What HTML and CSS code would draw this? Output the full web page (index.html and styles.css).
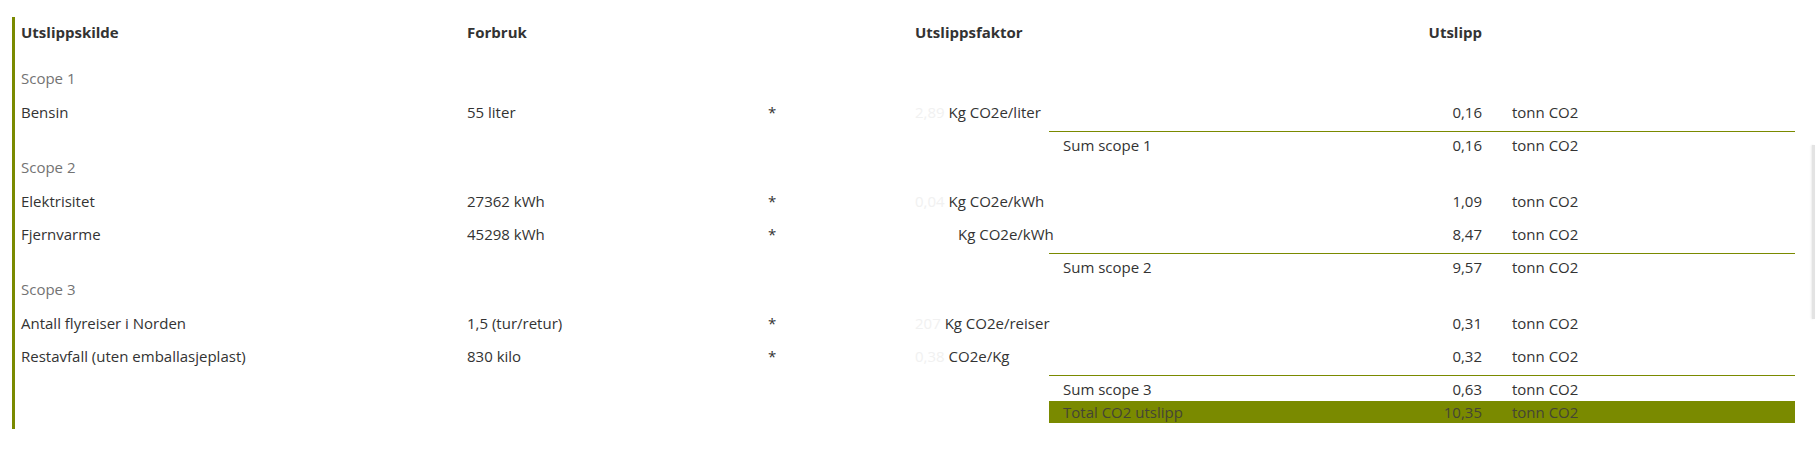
FILE: index.html
```html
<!DOCTYPE html>
<html lang="no">
<head>
<meta charset="utf-8">
<title>Utslipp</title>
<link rel="stylesheet" href="styles.css">
</head>
<body>
<div class="sheet">
  <div class="row row--head">
    <div class="cell">Utslippskilde</div>
    <div class="cell">Forbruk</div>
    <div class="cell"></div>
    <div class="cell">Utslippsfaktor</div>
    <div class="cell right">Utslipp</div>
    <div class="cell"></div>
  </div>

  <div class="row row--scope first"><div class="cell">Scope 1</div></div>
  <div class="row row--data first">
    <div class="cell">Bensin</div>
    <div class="cell">55 liter</div>
    <div class="cell">*</div>
    <div class="cell factor"><span class="faint">2,89</span> Kg CO2e/liter</div>
    <div class="cell right">0,16</div>
    <div class="cell unit">tonn CO2</div>
  </div>
  <div class="row row--sum">
    <div class="sumbox">
      <div class="cell sumcell"><span>Sum scope 1</span><span>0,16</span></div>
      <div class="cell unit">tonn CO2</div>
    </div>
  </div>

  <div class="row row--scope"><div class="cell">Scope 2</div></div>
  <div class="row row--data first">
    <div class="cell">Elektrisitet</div>
    <div class="cell">27362 kWh</div>
    <div class="cell">*</div>
    <div class="cell factor"><span class="faint">0,04</span> Kg CO2e/kWh</div>
    <div class="cell right">1,09</div>
    <div class="cell unit">tonn CO2</div>
  </div>
  <div class="row row--data">
    <div class="cell">Fjernvarme</div>
    <div class="cell">45298 kWh</div>
    <div class="cell">*</div>
    <div class="cell factor"><span class="faint faint--empty"></span>Kg CO2e/kWh</div>
    <div class="cell right">8,47</div>
    <div class="cell unit">tonn CO2</div>
  </div>
  <div class="row row--sum">
    <div class="sumbox">
      <div class="cell sumcell"><span>Sum scope 2</span><span>9,57</span></div>
      <div class="cell unit">tonn CO2</div>
    </div>
  </div>

  <div class="row row--scope"><div class="cell">Scope 3</div></div>
  <div class="row row--data first">
    <div class="cell">Antall flyreiser i Norden</div>
    <div class="cell">1,5 (tur/retur)</div>
    <div class="cell">*</div>
    <div class="cell factor"><span class="faint">207</span> Kg CO2e/reiser</div>
    <div class="cell right">0,31</div>
    <div class="cell unit">tonn CO2</div>
  </div>
  <div class="row row--data">
    <div class="cell">Restavfall (uten emballasjeplast)</div>
    <div class="cell">830 kilo</div>
    <div class="cell">*</div>
    <div class="cell factor"><span class="faint">0,38</span> CO2e/Kg</div>
    <div class="cell right">0,32</div>
    <div class="cell unit">tonn CO2</div>
  </div>
  <div class="row row--sum">
    <div class="sumbox">
      <div class="cell sumcell"><span>Sum scope 3</span><span>0,63</span></div>
      <div class="cell unit">tonn CO2</div>
    </div>
  </div>
  <div class="row row--total">
    <div class="sumbox sumbox--total">
      <div class="cell sumcell"><span>Total CO2 utslipp</span><span>10,35</span></div>
      <div class="cell unit">tonn CO2</div>
    </div>
  </div>
</div>
<div class="scrollthumb"></div>
</body>
</html>
```

FILE: styles.css
```css
html, body {
  margin: 0;
  padding: 0;
  background: #ffffff;
}

body {
  font-family: "Open Sans", "Noto Sans", "Liberation Sans", sans-serif;
  font-size: 15px;
  color: #333333;
  width: 1818px;
  height: 449px;
  overflow: hidden;
  position: relative;
}

.sheet {
  margin: 17px 0 0 12px;
  border-left: 3px solid #7a8a00;
  padding: 0 0 6px 6px;
  width: 1774px;
}

.row {
  display: grid;
  grid-template-columns: 446px 301px 147px 134px 433px 313px;
  align-items: center;
}

.cell {
  white-space: nowrap;
}

.right {
  text-align: right;
}

.row--head {
  height: 30px;
  font-weight: 700;
}

.row--scope {
  height: 22px;
  color: #737373;
}

.row--scope.first {
  margin-top: 20px;
}

.row--data {
  height: 33px;
}

.row--data.first {
  margin-top: 6px;
}

.faint {
  color: #f1f1f1;
}

.faint--empty {
  display: inline-block;
  width: 43px;
}

.unit {
  padding-left: 30px;
}

.row--sum {
  margin-top: 3px;
}

.sumbox {
  grid-column: 5 / 7;
  display: grid;
  grid-template-columns: 433px 313px;
  align-items: center;
  border-top: 1px solid #7a8a00;
  height: 24px;
  padding-top: 2px;
  box-sizing: border-box;
  height: 25px;
}

.sumcell {
  display: flex;
  justify-content: space-between;
  padding-left: 14px;
}

.row--total {
  margin-top: 1px;
}

.row--total .sumbox {
  border-top: none;
  padding-top: 0;
  height: 22px;
  background: #7a8a00;
  color: #454535;
}

.scrollthumb {
  position: absolute;
  right: 3px;
  top: 145px;
  width: 3px;
  height: 174px;
  background: #e3e3e3;
  box-shadow: -1px 0 2px rgba(0, 0, 0, 0.08);
}
```
